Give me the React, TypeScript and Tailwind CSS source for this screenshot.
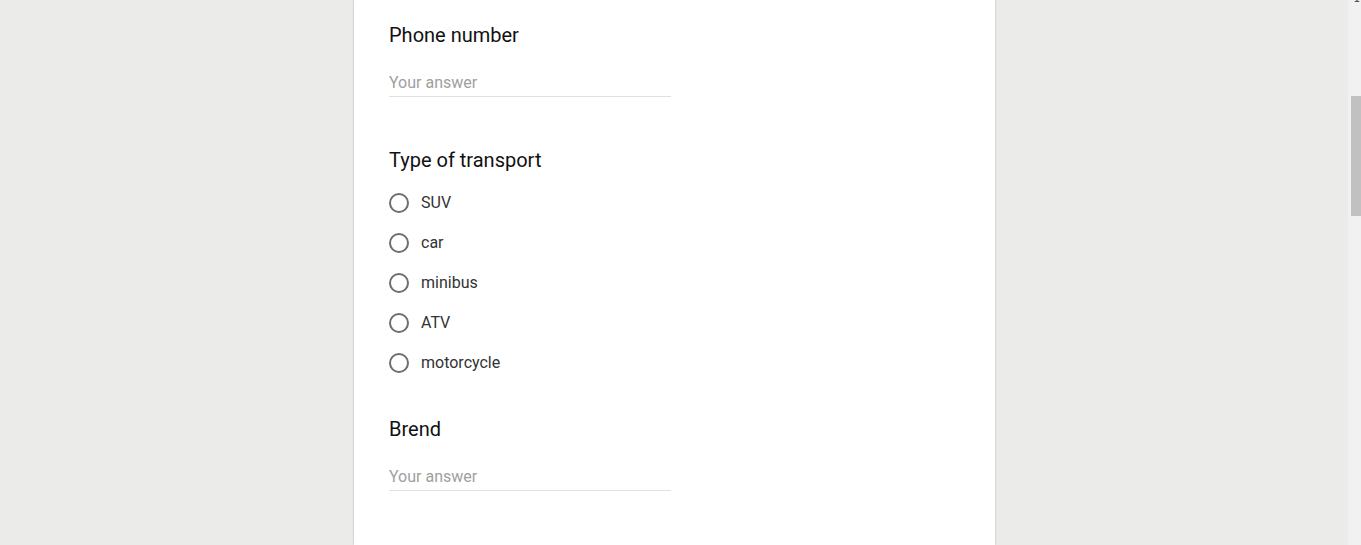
const transportOptions = ["SUV", "car", "minibus", "ATV", "motorcycle"];

function TextQuestion({ title }: { title: string }) {
  return (
    <div>
      <p className="text-[20px] leading-6 text-[#111111]">{title}</p>
      <input
        type="text"
        placeholder="Your answer"
        className="mt-[25px] block h-[25px] w-[282px] border-b border-[#e0e0e0] bg-transparent pb-1 text-[16px] leading-5 text-[#202124] outline-none placeholder:text-[#a0a0a0]"
      />
    </div>
  );
}

function RadioQuestion({ title, options }: { title: string; options: string[] }) {
  return (
    <div>
      <p className="text-[20px] leading-6 text-[#111111]">{title}</p>
      <div className="mt-[21px] flex flex-col gap-[20px]">
        {options.map((opt) => (
          <label key={opt} className="flex items-center gap-[12px] cursor-pointer">
            <span className="h-[20px] w-[20px] shrink-0 rounded-full border-2 border-[#6e6e6e]" />
            <span className="text-[16px] leading-5 text-[#333333]">{opt}</span>
          </label>
        ))}
      </div>
    </div>
  );
}

export default function App() {
  return (
    <div
      className="flex h-[545px] w-full overflow-hidden bg-[#ebebe9]"
      style={{ fontFamily: "Roboto, 'Noto Sans', Arial, sans-serif" }}
    >
      <div className="flex flex-1 justify-center pl-px">
        <div className="h-full w-[641px] bg-white pl-[35px] pt-[23px] shadow-[0_0_2px_rgba(0,0,0,0.25)]">
          <TextQuestion title="Phone number" />
          <div className="mt-[51px]">
            <RadioQuestion title="Type of transport" options={transportOptions} />
          </div>
          <div className="mt-[44px]">
            <TextQuestion title="Brend" />
          </div>
        </div>
      </div>
      {/* window scrollbar */}
      <div className="relative w-[13px] bg-[#f1f1f1]">
        <div className="absolute right-[1px] top-0 h-0 w-0 border-x-[3px] border-b-[2px] border-x-transparent border-b-[#505050]" />
        <div className="ml-[3px] mt-[96px] h-[120px] w-[10px] bg-[#c1c1c1]" />
      </div>
    </div>
  );
}
